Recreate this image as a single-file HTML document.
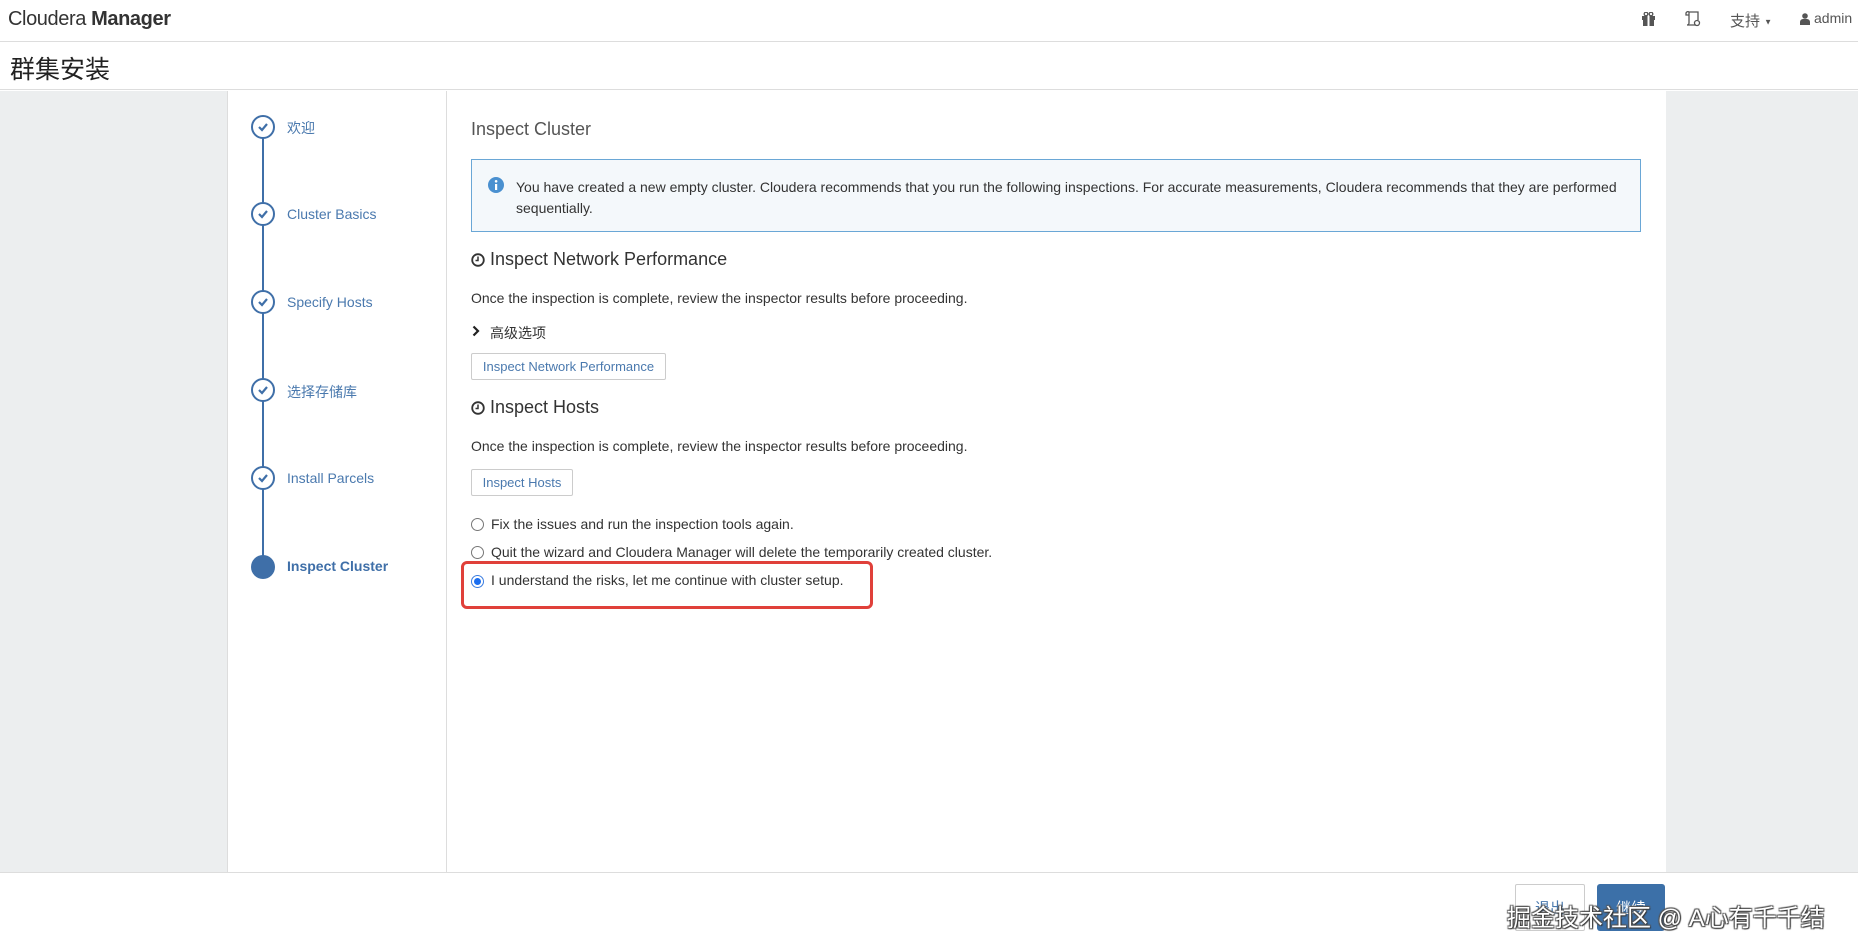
<!DOCTYPE html>
<html><head><meta charset="utf-8"><style>
*{margin:0;padding:0;box-sizing:border-box}
body{width:1858px;height:940px;position:relative;background:#fff;font-family:"Liberation Sans","Noto Sans CJK SC",sans-serif;color:#333;overflow:hidden}
.a{position:absolute}
.gray{background:#eceeef}
.step{position:absolute;left:251px;width:24px;height:24px;border:2px solid #3f6fa8;border-radius:50%;background:#fff}
.step svg{position:absolute;left:4px;top:4px}
.lbl{position:absolute;left:287px;font-size:14px;color:#4a79ae}
.btn{position:absolute;border:1px solid #ccc;border-radius:2px;font-size:13px;color:#4a79ae;display:flex;align-items:center;justify-content:center;background:#fff}
.radio{position:absolute;left:471px;width:13px;height:13px;border:1px solid #777;border-radius:50%;background:#fff}
.t14{position:absolute;font-size:14px;color:#333;white-space:nowrap}
</style></head><body>
<div class="a" style="left:0;top:0;width:1858px;height:42px;border-bottom:1px solid #ddd"></div>
<div class="a" style="left:8px;top:8px;font-size:20px;color:#333;letter-spacing:-0.4px">Cloudera <b>Manager</b></div>
<svg class="a" style="left:1641px;top:12px" width="15" height="14" viewBox="0 0 15 14"><rect x="1" y="4" width="13" height="4" fill="#555"/><rect x="2" y="8" width="11" height="6" fill="#555"/><rect x="6.5" y="4" width="2" height="10" fill="#fff"/><circle cx="5" cy="2" r="1.8" fill="none" stroke="#555" stroke-width="1.3"/><circle cx="10" cy="2" r="1.8" fill="none" stroke="#555" stroke-width="1.3"/></svg>
<svg class="a" style="left:1685px;top:11px" width="16" height="16" viewBox="0 0 16 16"><path d="M4 1h9v8M4 1v11a2 2 0 0 1-2 2h9M4 1a2 2 0 0 0-3 1v2h3" fill="none" stroke="#555" stroke-width="1.3"/><circle cx="12" cy="12" r="2.5" fill="none" stroke="#555" stroke-width="1.3"/></svg>
<div class="a" style="left:1730px;top:10px;font-size:15px;color:#555">支持 <span style="font-size:8px;vertical-align:middle">▼</span></div>
<svg class="a" style="left:1800px;top:13px" width="10" height="12" viewBox="0 0 10 12"><circle cx="5" cy="3" r="2.8" fill="#555"/><path d="M0 12v-3a3 3 0 0 1 3-3h4a3 3 0 0 1 3 3v3z" fill="#555"/></svg>
<div class="a" style="left:1814px;top:10px;font-size:14px;color:#555">admin</div>
<div class="a" style="left:0;top:43px;width:1858px;height:47px;border-bottom:1px solid #ddd"></div>
<div class="a" style="left:10px;top:50px;font-size:25px;color:#222">群集安装</div>
<div class="a gray" style="left:0;top:91px;width:227px;height:781px"></div>
<div class="a gray" style="left:1666px;top:91px;width:192px;height:781px"></div>
<div class="a" style="left:227px;top:91px;width:1px;height:781px;background:#ddd"></div>
<div class="a" style="left:446px;top:91px;width:1px;height:781px;background:#ddd"></div>
<div class="a" style="left:0;top:872px;width:1858px;height:1px;background:#ddd"></div>
<div class="a" style="left:262px;top:127px;width:2px;height:439px;background:#3f6fa8"></div>
<div class="step" style="top:115px"><svg width="12" height="12" viewBox="0 0 12 12"><path d="M2 6l3 3 5-6" fill="none" stroke="#3f6fa8" stroke-width="2.2"/></svg></div>
<div class="lbl" style="top:118px">欢迎</div>
<div class="step" style="top:202px"><svg width="12" height="12" viewBox="0 0 12 12"><path d="M2 6l3 3 5-6" fill="none" stroke="#3f6fa8" stroke-width="2.2"/></svg></div>
<div class="lbl" style="top:206px">Cluster Basics</div>
<div class="step" style="top:290px"><svg width="12" height="12" viewBox="0 0 12 12"><path d="M2 6l3 3 5-6" fill="none" stroke="#3f6fa8" stroke-width="2.2"/></svg></div>
<div class="lbl" style="top:294px">Specify Hosts</div>
<div class="step" style="top:378px"><svg width="12" height="12" viewBox="0 0 12 12"><path d="M2 6l3 3 5-6" fill="none" stroke="#3f6fa8" stroke-width="2.2"/></svg></div>
<div class="lbl" style="top:382px">选择存储库</div>
<div class="step" style="top:466px"><svg width="12" height="12" viewBox="0 0 12 12"><path d="M2 6l3 3 5-6" fill="none" stroke="#3f6fa8" stroke-width="2.2"/></svg></div>
<div class="lbl" style="top:470px">Install Parcels</div>
<div class="a" style="left:251px;top:555px;width:24px;height:24px;border-radius:50%;background:#3f6fa8"></div>
<div class="lbl" style="top:558px;font-weight:bold;color:#3f6fa8">Inspect Cluster</div>
<div class="a" style="left:471px;top:119px;font-size:18px;color:#555">Inspect Cluster</div>
<div class="a" style="left:471px;top:159px;width:1170px;height:73px;border:1px solid #6aa7d6;background:#f4f8fb"></div>
<svg class="a" style="left:488px;top:177px" width="16" height="16" viewBox="0 0 16 16"><circle cx="8" cy="8" r="8" fill="#4a90d0"/><rect x="7" y="7" width="2.2" height="6" fill="#fff"/><circle cx="8.1" cy="4.3" r="1.3" fill="#fff"/></svg>
<div class="a" style="left:516px;top:177px;font-size:14px;line-height:21px;color:#333;width:1110px">You have created a new empty cluster. Cloudera recommends that you run the following inspections. For accurate measurements, Cloudera recommends that they are performed sequentially.</div>
<svg class="a" style="left:471px;top:253px" width="14" height="14" viewBox="0 0 14 14"><circle cx="7" cy="7" r="5.8" fill="none" stroke="#333" stroke-width="1.8"/><path d="M7 3.5v4H4.5" fill="none" stroke="#333" stroke-width="1.5"/></svg>
<div class="a" style="left:490px;top:249px;font-size:18px;color:#333">Inspect Network Performance</div>
<div class="t14" style="left:471px;top:290px">Once the inspection is complete, review the inspector results before proceeding.</div>
<svg class="a" style="left:472px;top:325px" width="8" height="12" viewBox="0 0 8 12"><path d="M1.5 1.5l4.5 4.5-4.5 4.5" fill="none" stroke="#222" stroke-width="2.2"/></svg>
<div class="t14" style="left:490px;top:323px">高级选项</div>
<div class="btn" style="left:471px;top:353px;width:195px;height:27px">Inspect Network Performance</div>
<svg class="a" style="left:471px;top:401px" width="14" height="14" viewBox="0 0 14 14"><circle cx="7" cy="7" r="5.8" fill="none" stroke="#333" stroke-width="1.8"/><path d="M7 3.5v4H4.5" fill="none" stroke="#333" stroke-width="1.5"/></svg>
<div class="a" style="left:490px;top:397px;font-size:18px;color:#333">Inspect Hosts</div>
<div class="t14" style="left:471px;top:438px">Once the inspection is complete, review the inspector results before proceeding.</div>
<div class="btn" style="left:471px;top:469px;width:102px;height:27px">Inspect Hosts</div>
<div class="radio" style="top:518px"></div>
<div class="t14" style="left:491px;top:516px">Fix the issues and run the inspection tools again.</div>
<div class="radio" style="top:546px"></div>
<div class="t14" style="left:491px;top:544px">Quit the wizard and Cloudera Manager will delete the temporarily created cluster.</div>
<div class="a" style="left:461px;top:561px;width:412px;height:48px;border:3px solid #e0403a;border-radius:6px"></div>
<div class="radio" style="top:575px;border-color:#3b7de0"><div style="position:absolute;left:2px;top:2px;width:7px;height:7px;border-radius:50%;background:#1a6ef0"></div></div>
<div class="t14" style="left:491px;top:572px">I understand the risks, let me continue with cluster setup.</div>
<div class="btn" style="left:1515px;top:884px;width:70px;height:47px;font-size:15px">退出</div>
<div class="a" style="left:1597px;top:884px;width:68px;height:47px;background:#3c70a8;border-radius:3px;color:#fff;font-size:15px;display:flex;align-items:center;justify-content:center">继续</div>
<div class="a" style="left:1507px;top:898px;font-size:24px;color:#fff;white-space:nowrap;text-shadow:1px 1px 1px #333,-1px -1px 1px #555,1px -1px 1px #555,-1px 1px 1px #555">掘金技术社区 @ A心有千千结</div>
</body></html>
